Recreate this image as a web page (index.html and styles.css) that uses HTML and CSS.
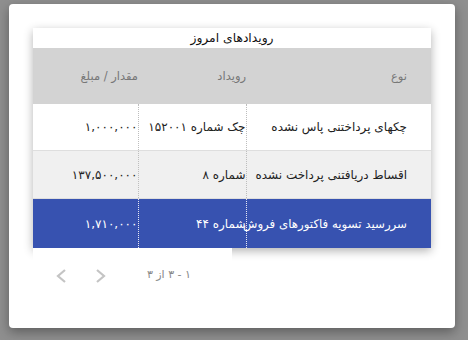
FILE: index.html
```html
<!DOCTYPE html>
<html lang="fa" dir="rtl">
<head>
 <meta charset="utf-8">
 <title>رویدادهای امروز</title>
 <link rel="stylesheet" href="styles.css">
</head>
<body>

 <div class="dialog">
 <div class="events-card">
 <div class="events-title">رویدادهای امروز</div>
 <table class="events-table">
 <thead>
 <tr>
 <th class="col-type">نوع</th>
 <th class="col-event">رویداد</th>
 <th class="col-amount">مقدار / مبلغ</th>
 </tr>
 </thead>
 <tbody>
 <tr class="row-1">
 <td class="col-type">چکهای پرداختنی پاس نشده</td>
 <td class="col-event">چک شماره ۱۵۲۰۰۱</td>
 <td class="col-amount">۱,۰۰۰,۰۰۰</td>
 </tr>
 <tr class="row-2">
 <td class="col-type">اقساط دریافتنی پرداخت نشده</td>
 <td class="col-event">شماره ۸</td>
 <td class="col-amount">۱۳۷,۵۰۰,۰۰۰</td>
 </tr>
 <tr class="row-3 selected">
 <td class="col-type">سررسید تسویه فاکتورهای فروش</td>
 <td class="col-event">شماره ۴۴</td>
 <td class="col-amount">۱,۷۱۰,۰۰۰</td>
 </tr>
 </tbody>
 </table>
 </div>

 <div class="paginator">
 <div class="paginator-row">
 <span class="range">۱ - ۳ از ۳</span>
 <button class="page-btn next" title="صفحه بعد">
 <svg width="12" height="16" viewBox="0 0 12 16"><path d="M2 2 L9 8 L2 14" fill="none" stroke="#c4c4c4" stroke-width="2.2"/></svg>
 </button>
 <button class="page-btn prev" title="صفحه قبل">
 <svg width="12" height="16" viewBox="0 0 12 16"><path d="M10 2 L3 8 L10 14" fill="none" stroke="#c4c4c4" stroke-width="2.2"/></svg>
 </button>
 </div>
 </div>
 </div>

</body>
</html>
```

FILE: styles.css
```css
body {
 margin: 0;
 padding: 4px 13px 12px 9px;
 background: #8f8f8f;
 font-family: "DejaVu Sans", sans-serif;
 direction: rtl;
}

.dialog {
 width: 398px;
 height: 276px;
 padding: 24px;
 background: white;
 border-radius: 4px;
 box-shadow: 0 4px 12px rgba(0, 0, 0, 0.35);
}

.events-card {
 background: white;
 box-shadow: 0 3px 9px rgba(0, 0, 0, 0.3);
 position: relative;
 z-index: 1;
}

.events-title {
 height: 20px;
 line-height: 20px;
 text-align: center;
 font-size: 12.3px;
 color: #111;
}

.events-table {
 width: 398px;
 border-collapse: collapse;
 table-layout: fixed;
 font-size: 12px;
}

.events-table th {
 height: 56px;
 padding: 0;
 background: #d3d3d3;
 color: #777;
 font-weight: normal;
 font-size: 11.5px;
 text-align: right;
}

.events-table td {
 padding: 0;
 text-align: right;
 white-space: nowrap;
 color: #222;
 border-bottom: 1px solid #dedede;
}

.col-type { width: 161px; }
.col-event { width: 108px; }
.col-amount { width: 105px; }

th.col-type, td.col-type { padding-right: 24px; }
td.col-type, td.col-event { border-left: 1px dotted #bdbdbd; }

.row-1 td { height: 46px; background: white; }
.row-2 td { height: 47px; background: #f0f0f0; }

.row-3 td {
 height: 49px;
 background: #3752b0;
 color: white;
 border-bottom: none;
}
.row-3 td.col-type {
 font-size: 11.8px;
 letter-spacing: -0.1px;
}
.row-3 td.col-type, .row-3 td.col-event { border-left-color: #e8e8f4; }

/* white strip under the table, covers the card shadow */
.paginator {
 position: relative;
 z-index: 2;
 width: 199px;
 height: 18px;
 margin-right: auto;
 background: white;
}

.paginator-row {
 display: flex;
 align-items: center;
 padding-top: 18px;
}

.range {
 margin-right: 41px;
 font-size: 11px;
 color: #888;
 margin-top: -3px;
}

.page-btn {
 border: none;
 background: none;
 padding: 0;
 width: 18px;
 height: 20px;
 display: flex;
 align-items: center;
 justify-content: center;
}
.page-btn.next { margin-right: 37px; }
.page-btn.prev { margin-right: 22px; }
```
